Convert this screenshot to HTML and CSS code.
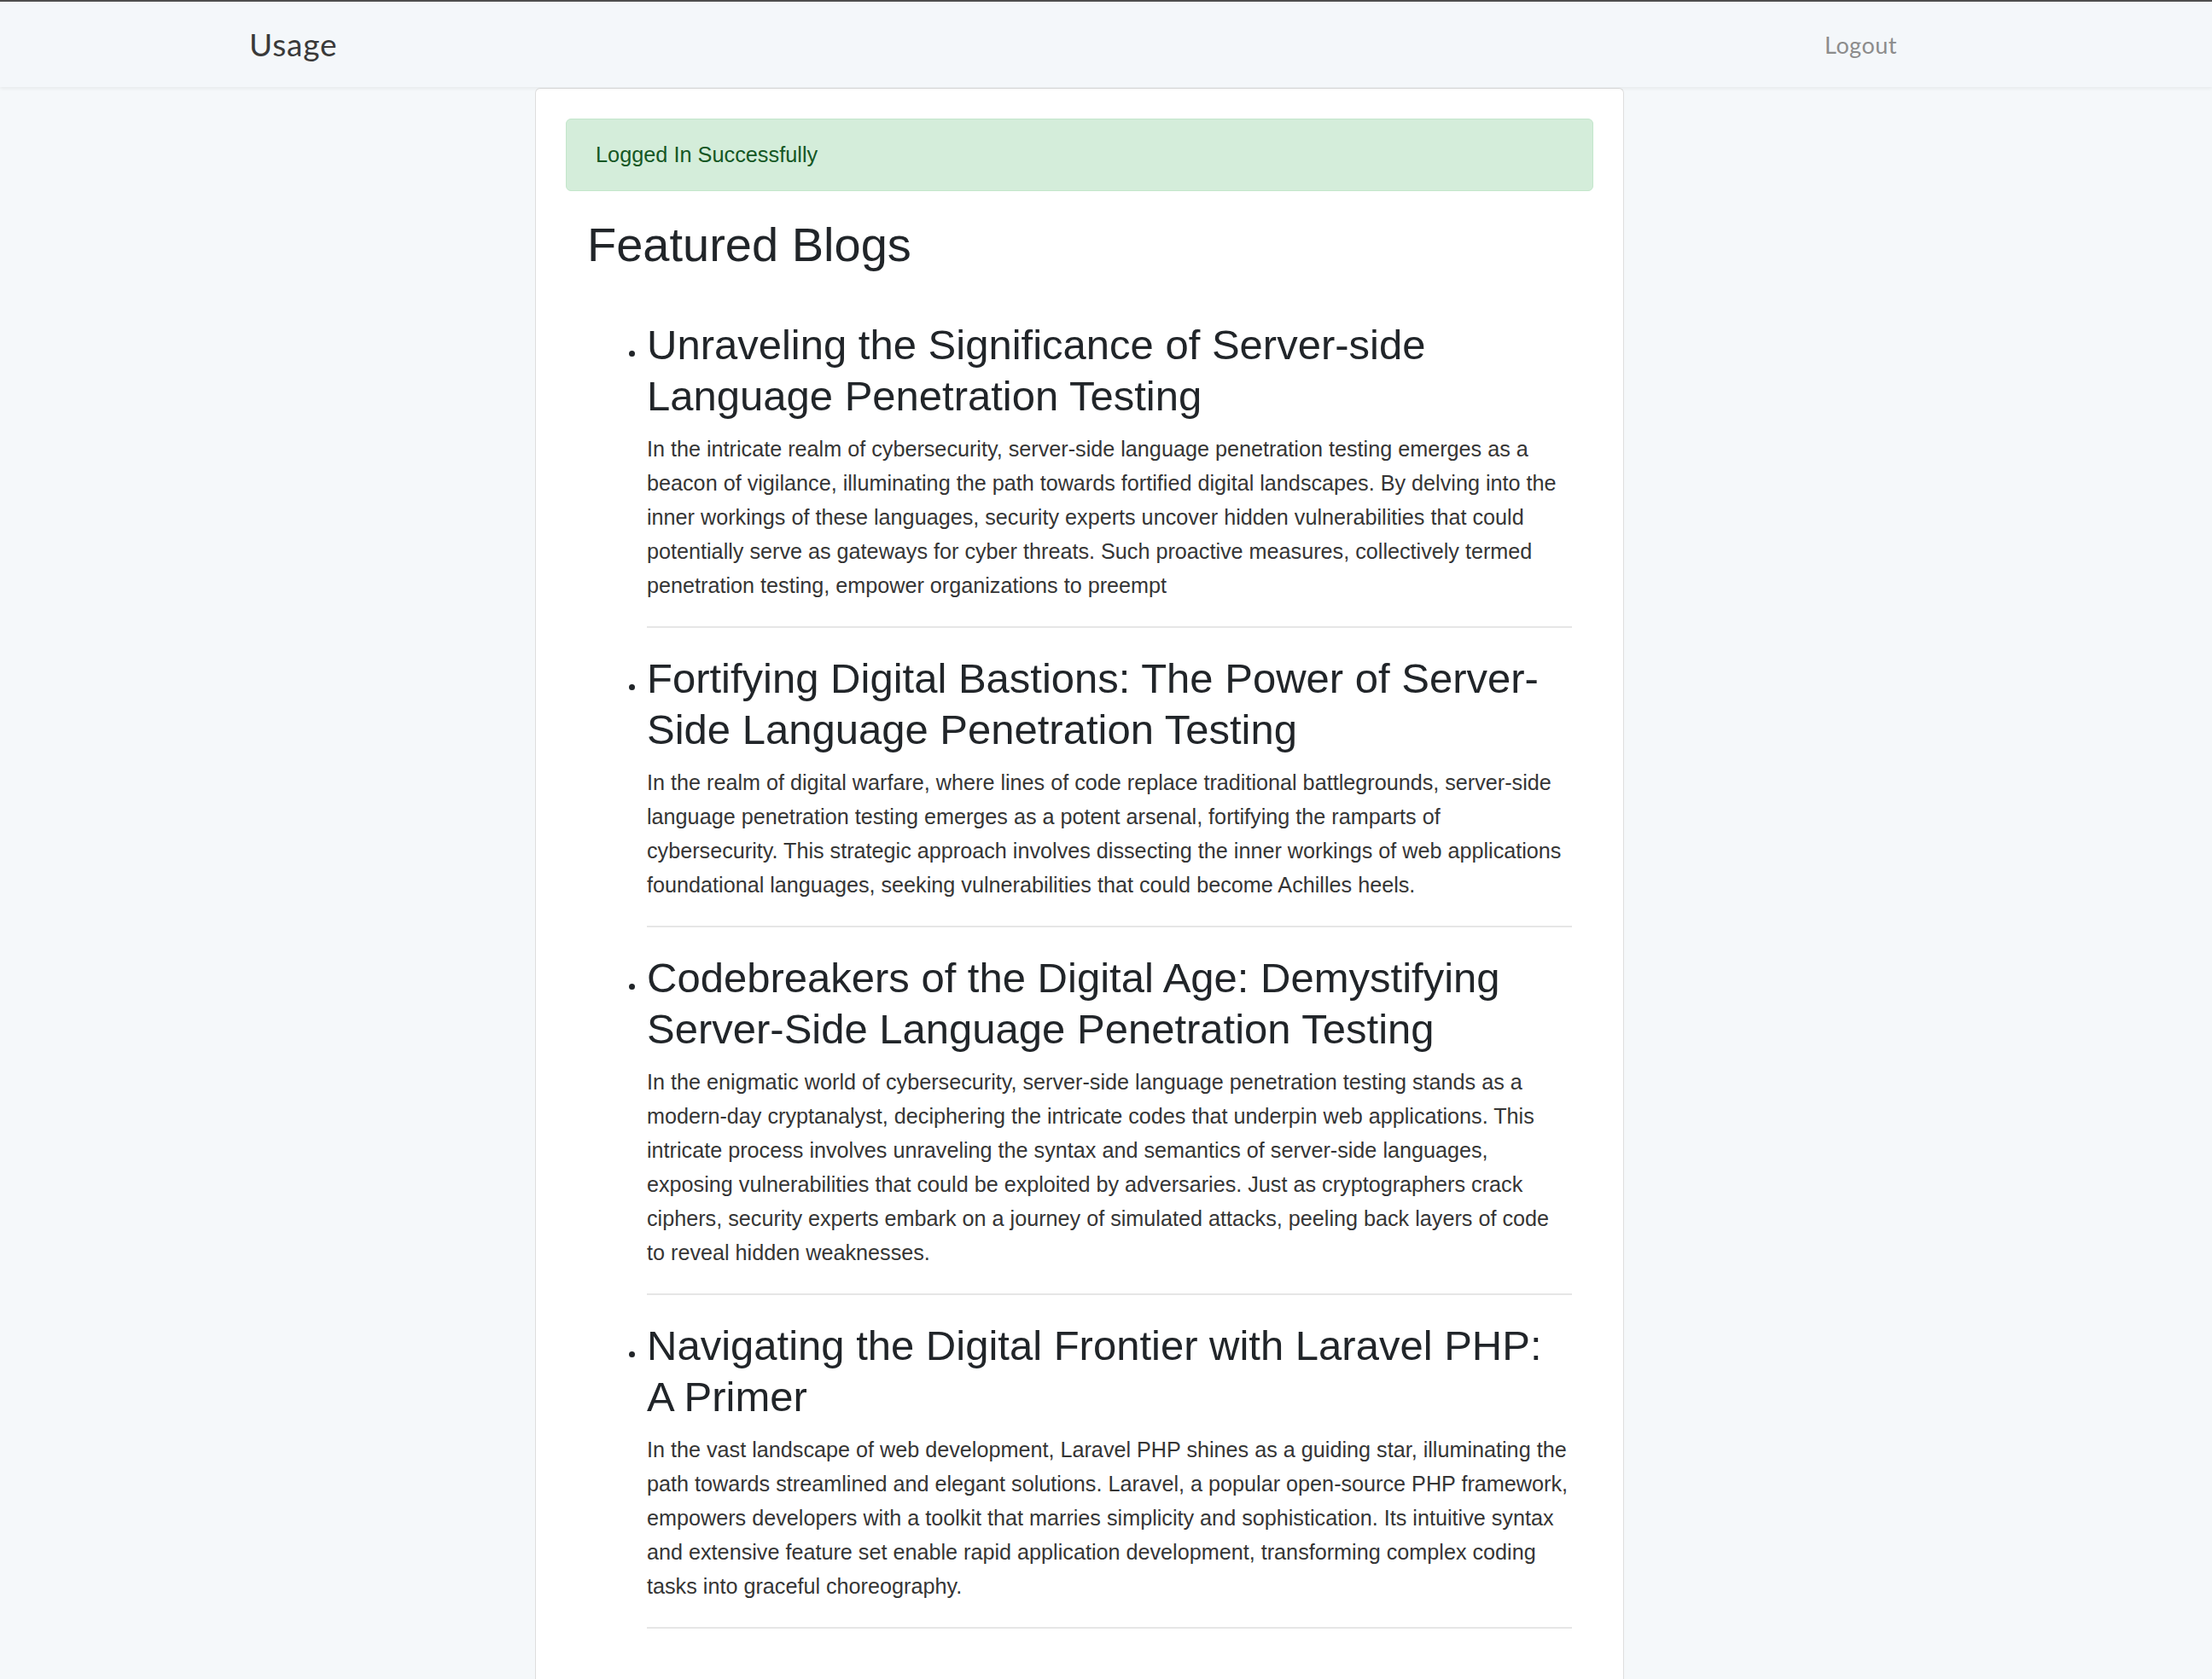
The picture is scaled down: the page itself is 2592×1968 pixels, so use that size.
FILE: index.html
```html
<!DOCTYPE html>
<html lang="en">
<head>
<meta charset="utf-8">
<title>Usage</title>
<link rel="stylesheet" href="styles.css">
</head>
<body>
<nav class="navbar">
  <div class="nav-frame">
    <div class="nav-inner">
      <a class="brand" href="#">Usage</a>
      <a class="nav-link" href="#">Logout</a>
    </div>
  </div>
</nav>
<div class="page">
  <main class="card">
    <div class="alert">Logged In Successfully</div>
    <section class="blogs">
      <h2 class="blogs-title">Featured Blogs</h2>
      <ul class="blog-list">
        <li class="blog-item">
          <h3 class="blog-title">Unraveling the Significance of Server-side Language Penetration Testing</h3>
          <p class="blog-text">In the intricate realm of cybersecurity, server-side language penetration testing emerges as a beacon of vigilance, illuminating the path towards fortified digital landscapes. By delving into the inner workings of these languages, security experts uncover hidden vulnerabilities that could potentially serve as gateways for cyber threats. Such proactive measures, collectively termed penetration testing, empower organizations to preempt</p>
          <hr class="blog-sep">
        </li>
        <li class="blog-item">
          <h3 class="blog-title">Fortifying Digital Bastions: The Power of Server-Side Language Penetration Testing</h3>
          <p class="blog-text">In the realm of digital warfare, where lines of code replace traditional battlegrounds, server-side language penetration testing emerges as a potent arsenal, fortifying the ramparts of cybersecurity. This strategic approach involves dissecting the inner workings of web applications foundational languages, seeking vulnerabilities that could become Achilles heels.</p>
          <hr class="blog-sep">
        </li>
        <li class="blog-item">
          <h3 class="blog-title">Codebreakers of the Digital Age: Demystifying Server-Side Language Penetration Testing</h3>
          <p class="blog-text">In the enigmatic world of cybersecurity, server-side language penetration testing stands as a modern-day cryptanalyst, deciphering the intricate codes that underpin web applications. This intricate process involves unraveling the syntax and semantics of server-side languages, exposing vulnerabilities that could be exploited by adversaries. Just as cryptographers crack ciphers, security experts embark on a journey of simulated attacks, peeling back layers of code to reveal hidden weaknesses.</p>
          <hr class="blog-sep">
        </li>
        <li class="blog-item">
          <h3 class="blog-title">Navigating the Digital Frontier with Laravel PHP: A Primer</h3>
          <p class="blog-text">In the vast landscape of web development, Laravel PHP shines as a guiding star, illuminating the path towards streamlined and elegant solutions. Laravel, a popular open-source PHP framework, empowers developers with a toolkit that marries simplicity and sophistication. Its intuitive syntax and extensive feature set enable rapid application development, transforming complex coding tasks into graceful choreography.</p>
          <hr class="blog-sep">
        </li>
      </ul>
    </section>
  </main>
</div>
</body>
</html>
```
FILE: styles.css
```css
html, body {
  margin: 0;
  padding: 0;
}
body {
  background: #f5f8fa;
  overflow: hidden;
  font-family: "Liberation Sans", Arial, sans-serif;
  color: #212529;
}
.navbar {
  height: 100px;
  border-top: 2px solid #4e4e4e;
  background: #f4f7fa;
  box-shadow: 0 2px 4px rgba(0, 0, 0, 0.06);
  position: relative;
  z-index: 1;
}
.nav-frame {
  width: 2530px;
  height: 100%;
}
.nav-inner {
  width: 1966px;
  margin: 0 auto;
  height: 100%;
  display: flex;
  align-items: center;
  justify-content: space-between;
  box-sizing: border-box;
  padding: 0 12px 0 10px;
}
.brand {
  font-family: Lato, "Open Sans", sans-serif;
  font-size: 37px;
  letter-spacing: 0.8px;
  color: #3a3a3a;
  text-decoration: none;
  padding-bottom: 2px;
}
.nav-link {
  font-family: Lato, "Open Sans", sans-serif;
  font-size: 27px;
  letter-spacing: 0.5px;
  color: #8c8c8c;
  text-decoration: none;
  padding: 0 13px;
}
.page {
  width: 2530px;
}
.card {
  display: block;
  width: 1276px;
  min-height: 1865px;
  box-sizing: border-box;
  margin: 1px auto 0;
  background: #fff;
  border: 1px solid #dedede;
  border-bottom: 0;
  border-radius: 6px 6px 0 0;
  padding: 35px 35px 0;
}
.alert {
  background: #d4edda;
  border: 1px solid #c3e6cb;
  color: #155724;
  border-radius: 6px;
  padding: 20px 34px;
  font-size: 25.3px;
  line-height: 43px;
  margin-bottom: 31px;
}
.blogs {
  padding: 0 25px;
}
.blogs-title {
  font-size: 56px;
  line-height: 64px;
  font-weight: 400;
  margin: 0 0 55px;
  color: #212529;
}
.blog-list {
  margin: 0;
  padding: 0 0 0 70px;
  font-size: 24px;
}
.blog-title {
  font-size: 49px;
  line-height: 60px;
  font-weight: 400;
  margin: 0 0 12px;
  color: #212529;
}
.blog-text {
  font-size: 25.2px;
  line-height: 40px;
  margin: 0;
  color: #353535;
}
.blog-sep {
  border: 0;
  height: 2px;
  background: #e6e6e6;
  margin: 28px 0 29px;
}
```
